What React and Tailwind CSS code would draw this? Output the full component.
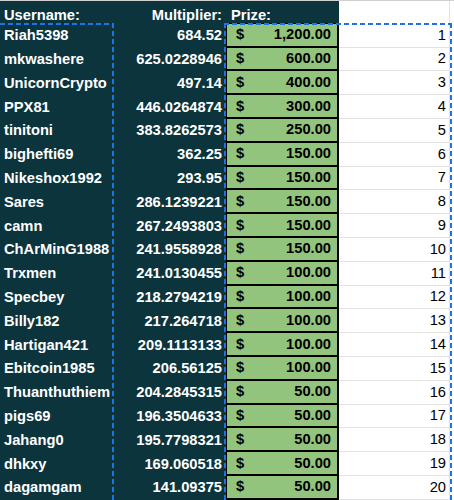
import React from "react";

const rows = [
  ["Riah5398", "684.52", "1,200.00"],
  ["mkwashere", "625.0228946", "600.00"],
  ["UnicornCrypto", "497.14", "400.00"],
  ["PPX81", "446.0264874", "300.00"],
  ["tinitoni", "383.8262573", "250.00"],
  ["bighefti69", "362.25", "150.00"],
  ["Nikeshox1992", "293.95", "150.00"],
  ["Sares", "286.1239221", "150.00"],
  ["camn", "267.2493803", "150.00"],
  ["ChArMinG1988", "241.9558928", "150.00"],
  ["Trxmen", "241.0130455", "100.00"],
  ["Specbey", "218.2794219", "100.00"],
  ["Billy182", "217.264718", "100.00"],
  ["Hartigan421", "209.1113133", "100.00"],
  ["Ebitcoin1985", "206.56125", "100.00"],
  ["Thuanthuthiem", "204.2845315", "50.00"],
  ["pigs69", "196.3504633", "50.00"],
  ["Jahang0", "195.7798321", "50.00"],
  ["dhkxy", "169.060518", "50.00"],
  ["dagamgam", "141.09375", "50.00"],
];

const font = "font-['Liberation_Sans',Arial,sans-serif] text-[14.7px] leading-[17px]";

export default function App() {
  return (
    <div className={`relative w-[454px] h-[500px] overflow-hidden bg-white ${font}`}>
      {/* header */}
      <div className="flex h-[23.8px] border-t border-[#d0d0d0]">
        <div className="w-[113px] bg-[#0c343d] text-white font-bold flex items-end pl-[4px]">Username:</div>
        <div className="w-[113px] bg-[#0c343d] text-white font-bold flex items-end justify-end pr-[4px]">Multiplier:</div>
        <div className="w-[113px] bg-[#0c343d] text-white font-bold flex items-end pl-[5px]">Prize:</div>
        <div className="w-[111px] border-r border-[#e2e2e2]"></div>
        <div className="flex-1"></div>
      </div>
      {rows.map(([name, mult, prize], i) => (
        <div key={i} className="flex h-[23.8px]">
          <div className="w-[113px] bg-[#0c343d] text-white font-bold flex items-center pl-[4px] whitespace-nowrap overflow-hidden">{name}</div>
          <div className="w-[113px] bg-[#0c343d] text-white font-bold flex items-center justify-end pr-[4px] whitespace-nowrap">{mult}</div>
          <div className="w-[113px] bg-[#0c343d] flex">
            <div className="flex-1 bg-[#93c47d] border-l border-r-2 border-b-2 border-t border-black text-black font-bold flex items-center justify-between pl-[9px] pr-[6px] -mt-px">
              <span>$</span>
              <span>{prize}</span>
            </div>
          </div>
          <div className="w-[111px] border-r border-b border-[#e2e2e2] text-black flex items-center justify-end pr-[3px]">{i + 1}</div>
          <div className="flex-1"></div>
        </div>
      ))}

      {/* copy marquee A2:A21 */}
      <div className="absolute left-0 top-[23px] w-[114px] h-[2px] bg-[image:repeating-linear-gradient(to_right,#1a73e8_0_5px,transparent_5px_8px)]"></div>
      <div className="absolute left-[112px] top-[23px] w-[2px] bottom-0 bg-[image:repeating-linear-gradient(to_bottom,#1a73e8_0_5px,transparent_5px_8px)]"></div>

      {/* copy marquee C2:D21 */}
      <div className="absolute left-[224px] top-[23px] w-[228px] h-[2px] bg-[image:repeating-linear-gradient(to_right,#1a73e8_0_5px,transparent_5px_8px)]"></div>
      <div className="absolute left-[224px] top-[23px] w-[2px] bottom-0 bg-[image:repeating-linear-gradient(to_bottom,#1a73e8_0_5px,transparent_5px_8px)]"></div>
      <div className="absolute left-[450px] top-[23px] w-[2px] bottom-0 bg-[image:repeating-linear-gradient(to_bottom,#1a73e8_0_5px,transparent_5px_8px)]"></div>
    </div>
  );
}
